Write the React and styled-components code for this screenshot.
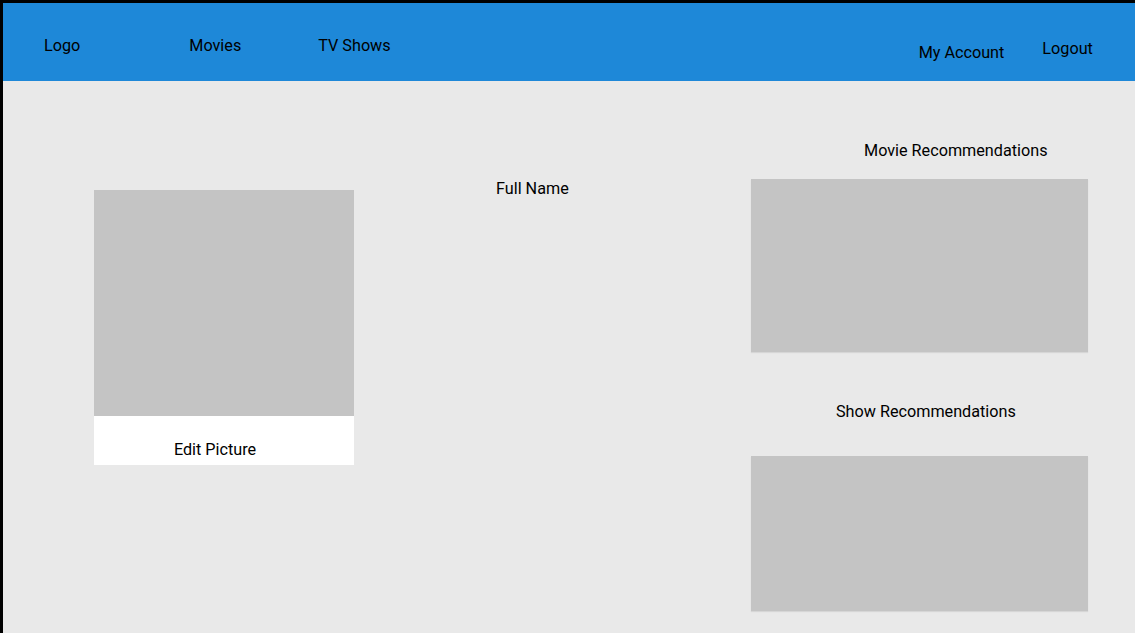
import React from "react";
import styled, { createGlobalStyle } from "styled-components";

const Global = createGlobalStyle`
  html, body { margin: 0; padding: 0; }
  body { font-family: Roboto, "Liberation Sans", sans-serif; background: #e9e9e9; }
  * { box-sizing: border-box; }
`;

const Frame = styled.div`
  width: 1135px;
  height: 633px;
  border-top: 3px solid #000;
  border-left: 3px solid #000;
  background: #e9e9e9;
  display: flex;
  flex-direction: column;
  overflow: hidden;
`;

const Header = styled.header`
  height: 78px;
  background: #1e88d8;
  display: flex;
  align-items: flex-start;
  padding-left: 41px;
  flex-shrink: 0;
`;

const NavItem = styled.a`
  font-size: 16.2px;
  line-height: 19px;
  color: #000;
  text-decoration: none;
  margin-top: ${(p) => p.$top}px;
  margin-left: ${(p) => p.$left || 0}px;
  cursor: pointer;
`;

const Main = styled.main`
  flex: 1;
  display: grid;
  grid-template-columns: 260px 397px 337px;
  padding-left: 91px;
`;

const PictureColumn = styled.section`
  padding-top: 109px;
`;

const Placeholder = styled.div`
  background: #c4c4c4;
  width: 100%;
  height: ${(p) => p.$h}px;
  box-shadow: ${(p) => (p.$shadow ? "0 1px 1px rgba(0,0,0,0.08)" : "none")};
`;

const EditButton = styled.button`
  width: 100%;
  height: 49px;
  background: #fff;
  border: none;
  font-family: inherit;
  font-size: 16.2px;
  line-height: 19px;
  color: #000;
  display: flex;
  align-items: flex-end;
  justify-content: center;
  padding: 0 18px 6px 0;
  margin: 0;
  cursor: pointer;
`;

const NameColumn = styled.section`
  padding-top: 98px;
  padding-left: 142px;
`;

const Label = styled.div`
  font-size: 16.2px;
  line-height: 19px;
  color: #000;
  padding-left: ${(p) => p.$left || 0}px;
  margin-top: ${(p) => p.$top || 0}px;
  margin-bottom: ${(p) => p.$bottom || 0}px;
  white-space: nowrap;
`;

const RecColumn = styled.section`
  display: flex;
  flex-direction: column;
`;

export default function App() {
  return (
    <>
      <Global />
      <Frame>
        <Header>
          <NavItem $top={33}>Logo</NavItem>
          <NavItem $top={33} $left={109}>Movies</NavItem>
          <NavItem $top={33} $left={77}>TV Shows</NavItem>
          <NavItem $top={40} $left={528}>My Account</NavItem>
          <NavItem $top={36} $left={38}>Logout</NavItem>
        </Header>
        <Main>
          <PictureColumn>
            <Placeholder $h={226} />
            <EditButton>Edit Picture</EditButton>
          </PictureColumn>
          <NameColumn>
            <Label>Full Name</Label>
          </NameColumn>
          <RecColumn>
            <Label $top={60} $bottom={19} $left={113}>Movie Recommendations</Label>
            <Placeholder $h={173} $shadow />
            <Label $top={50} $bottom={35} $left={85}>Show Recommendations</Label>
            <Placeholder $h={155} $shadow />
          </RecColumn>
        </Main>
      </Frame>
    </>
  );
}
